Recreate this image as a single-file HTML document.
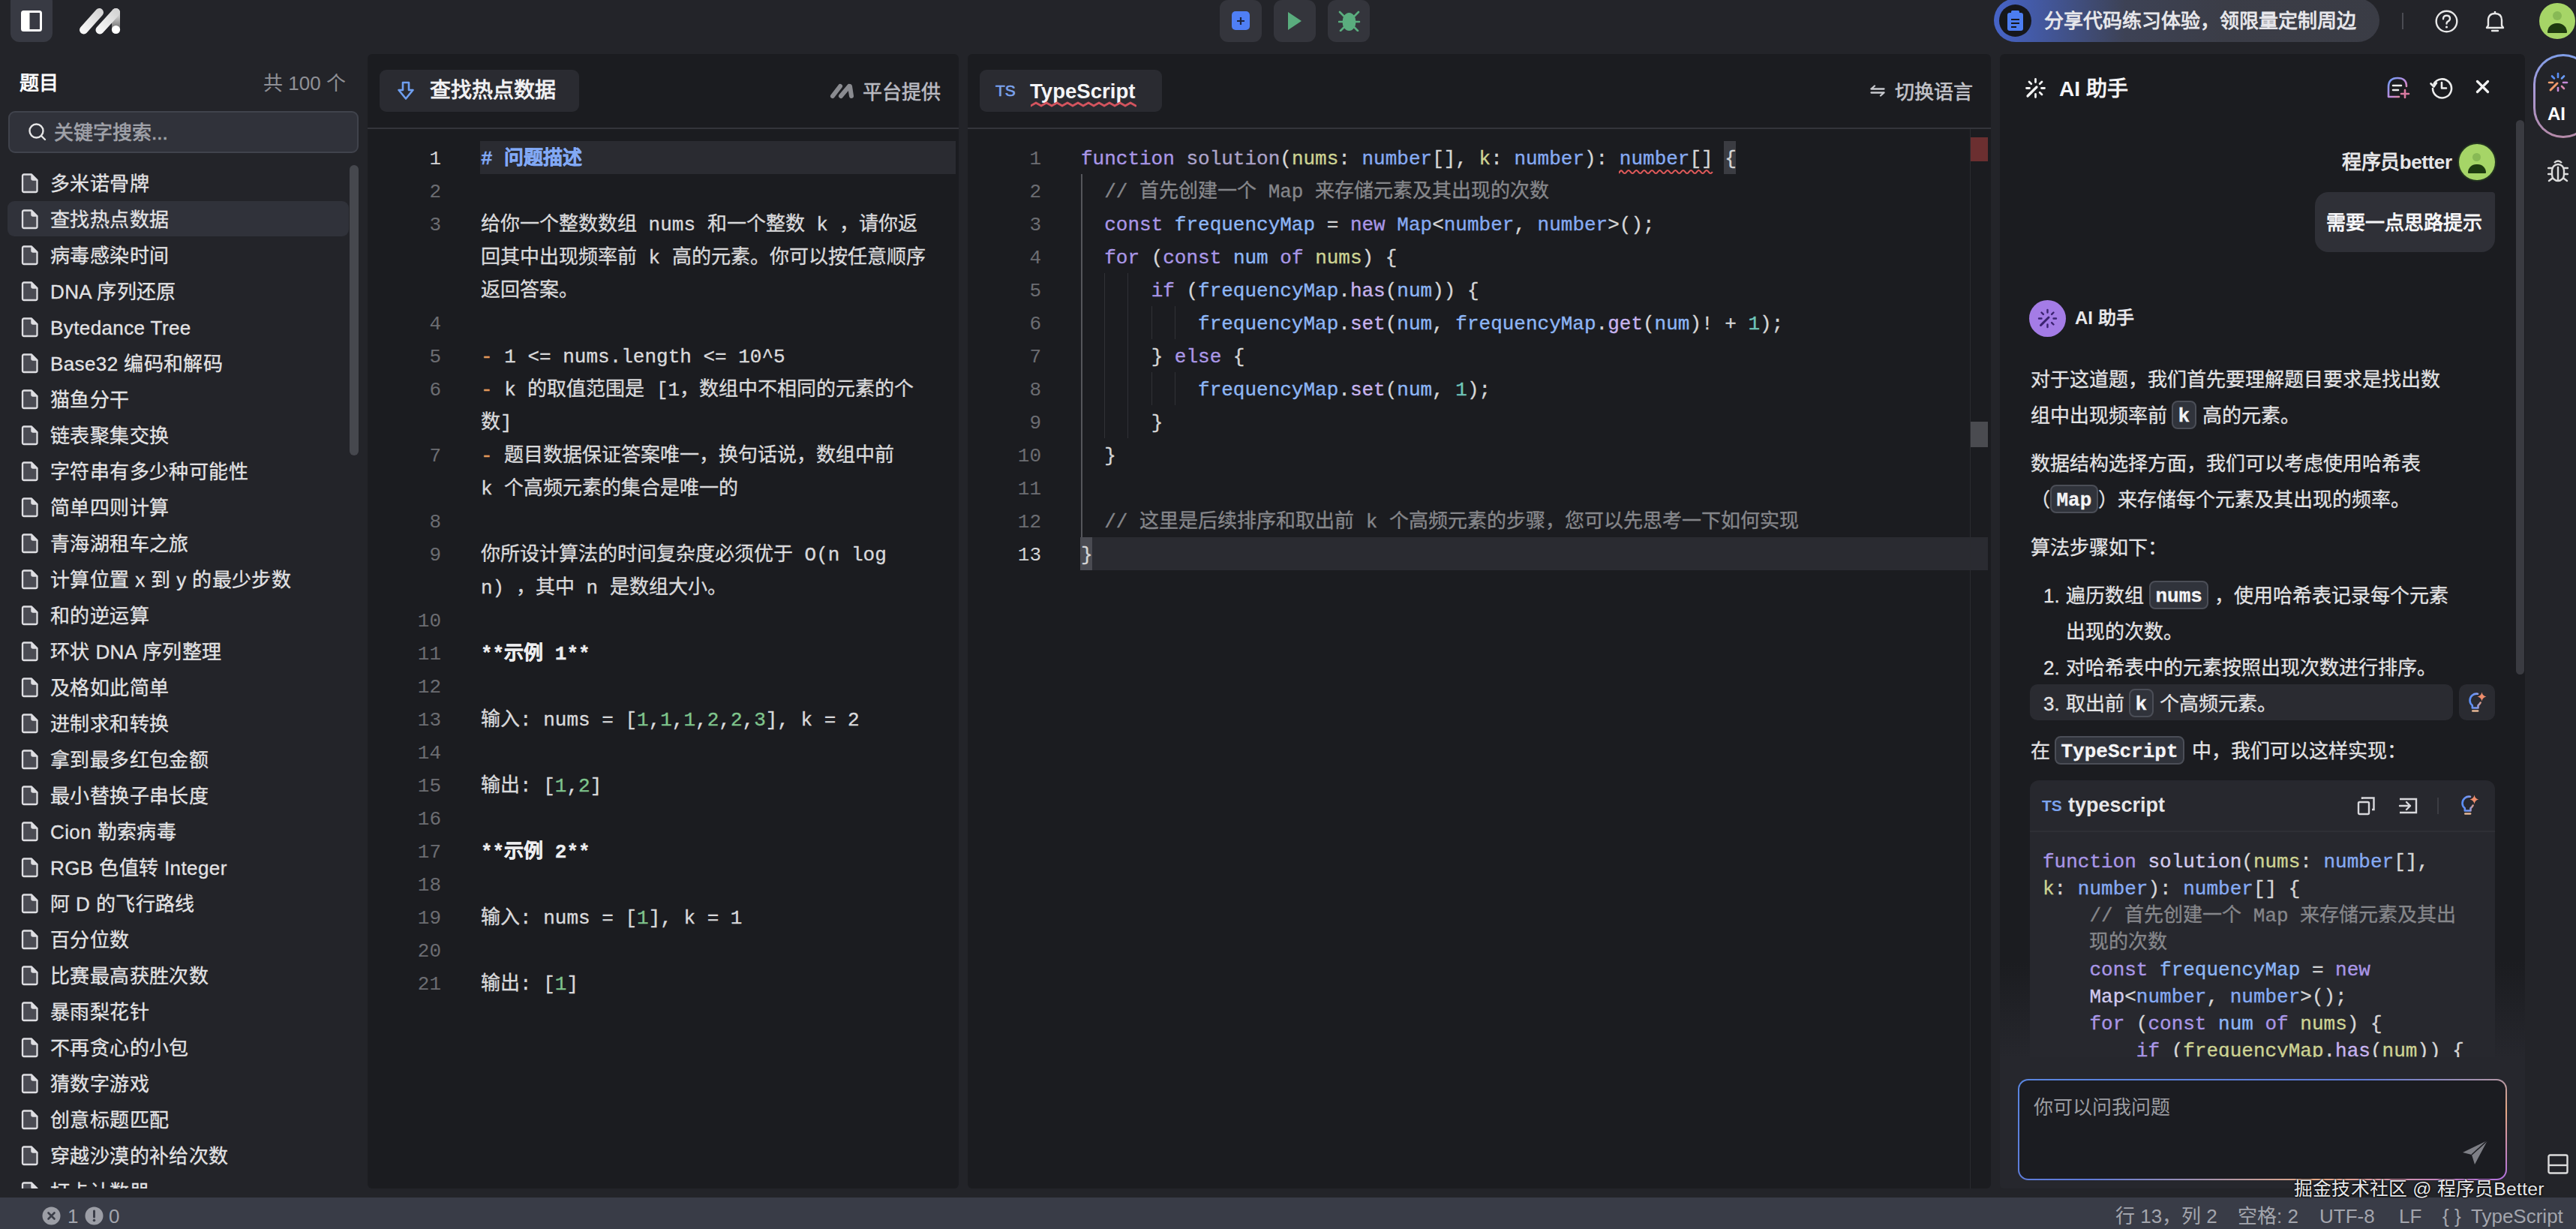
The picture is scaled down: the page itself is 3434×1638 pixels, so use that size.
<!DOCTYPE html><html lang="zh-CN"><head><meta charset="utf-8"><style>
*{margin:0;padding:0;box-sizing:border-box}
html,body{width:3434px;height:1638px;overflow:hidden;background:#232429;font-family:"Liberation Sans",sans-serif;color:#e4e4e6}
.abs{position:absolute}
.mono{font-family:"Liberation Mono",monospace}
.ln{position:absolute;margin-top:2px;-webkit-text-stroke:0.35px currentColor;white-space:pre;font-family:"Liberation Mono",monospace;font-size:26px;line-height:44px;height:44px}
.num{position:absolute;margin-top:2px;text-align:right;font-family:"Liberation Mono",monospace;font-size:26px;line-height:44px;height:44px;color:#6c6d72}
.kw{color:#a996e6}.fn{color:#aba3c8}.pa{color:#cdd393}.ty{color:#86aaf2}.va{color:#8db6f5}.pu{color:#d6d6d6}.cm{color:#85868a}.nu{color:#6fc4b9}.me{color:#c7b3ee}
.hd{color:#82a9f5;font-weight:bold}.or{color:#e0985a}.gn{color:#7fc48c}.bd{font-weight:bold;color:#ededef}.dsc{color:#d9d9db}.sq{text-decoration:underline wavy #d05555;text-decoration-thickness:2px;text-underline-offset:5px}
.fn2{color:#d2caee}.aip{position:absolute;white-space:pre;font-size:26px;line-height:48px;color:#e2e2e4;-webkit-text-stroke:0.3px currentColor}.chip{display:inline-block;vertical-align:middle;font-family:"Liberation Mono",monospace;font-weight:bold;color:#f4f4f6;background:#30333b;border:2px solid #4b4e57;border-radius:8px;padding:4px 6.5px 0;line-height:30px;height:38px;position:relative;top:-3px}
.li{position:absolute;left:0;width:490px;height:48px}
.li svg{position:absolute;left:28px;top:10px}
.li span{position:absolute;left:67px;top:1px;line-height:48px;font-size:26px;color:#e2e2e4;white-space:pre;letter-spacing:0.4px;-webkit-text-stroke:0.3px currentColor}
</style></head><body>
<div class="abs" style="left:14px;top:-10px;width:56px;height:66px;border-radius:12px;background:#383a43"></div>
<svg class="abs" style="left:28px;top:14px" width="28" height="28" viewBox="0 0 28 28">
<rect x="1.5" y="1.5" width="25" height="25" rx="2" fill="none" stroke="#fff" stroke-width="3"/>
<rect x="1.5" y="1.5" width="10" height="25" fill="#fff"/></svg>
<svg class="abs" style="left:104px;top:10px" width="60" height="40" viewBox="0 0 60 40">
<defs><linearGradient id="lg1" x1="0" y1="1" x2="1" y2="0"><stop offset="0" stop-color="#f6f6f6"/><stop offset="1" stop-color="#d6d6d6"/></linearGradient>
<linearGradient id="lg2" x1="0" y1="0" x2="0" y2="1"><stop offset="0" stop-color="#d8d8d8"/><stop offset="0.35" stop-color="#c8c8c8"/><stop offset="1" stop-color="#555"/></linearGradient></defs>
<rect x="45" y="1" width="11" height="32" rx="5.5" fill="url(#lg2)"/>
<line x1="7.5" y1="30" x2="28.5" y2="6.5" stroke="url(#lg1)" stroke-width="11" stroke-linecap="round"/>
<line x1="29" y1="30" x2="50.5" y2="6.5" stroke="url(#lg1)" stroke-width="11" stroke-linecap="round"/>
<circle cx="50.5" cy="29.5" r="5.6" fill="#fff"/></svg>
<div class="abs" style="left:1626px;top:0px;width:56px;height:56px;border-radius:11px;background:#34353c"></div>
<div class="abs" style="left:1698px;top:0px;width:56px;height:56px;border-radius:11px;background:#34353c"></div>
<div class="abs" style="left:1770px;top:0px;width:56px;height:56px;border-radius:11px;background:#34353c"></div>
<div class="abs" style="left:1642px;top:15px;width:24px;height:25px;border-radius:5px;background:#4f7ff5"></div>
<svg class="abs" style="left:1642px;top:15px" width="24" height="25" viewBox="0 0 24 25"><path d="M12 8v10M7 13h10" stroke="#1d2540" stroke-width="2.2"/></svg>
<svg class="abs" style="left:1716px;top:16px" width="20" height="24" viewBox="0 0 20 24"><path d="M1 0 L19 12 L1 24 Z" fill="#5aad7e"/></svg>
<svg class="abs" style="left:1784px;top:14px" width="30" height="28" viewBox="0 0 30 28">
<ellipse cx="14.5" cy="15" rx="9" ry="12" fill="#5aad7e"/>
<path d="M2 2 L8 8 M27 2 L21 8 M1 15 H6 M23 15 H28 M3 27 L8 22 M26 27 L21 22" stroke="#5aad7e" stroke-width="2.6" stroke-linecap="round"/></svg>
<div class="abs" style="left:2658px;top:-2px;width:514px;height:58px;border-radius:29px;background:linear-gradient(90deg,#4664c8 0%,#3d4255 34%,#3b3d47 60%,#3a3c45 100%)"></div>
<div class="abs" style="left:2665px;top:6px;width:43px;height:43px;border-radius:50%;background:#16171b"></div>
<svg class="abs" style="left:2675px;top:14px" width="23" height="28" viewBox="0 0 23 28"><rect x="1" y="3" width="21" height="24" rx="3" fill="#4c7df0"/><rect x="6" y="0" width="11" height="5" rx="1.5" fill="#4c7df0"/><path d="M6 12h11M6 17h11M6 22h7" stroke="#16171b" stroke-width="2.2"/></svg>
<div class="abs" style="left:2725px;top:8px;line-height:40px;font-size:26px;color:#e6e6ea;font-weight:bold;white-space:pre">分享代码练习体验，领限量定制周边</div>
<div class="abs" style="left:3202px;top:17px;width:2px;height:22px;background:#4a4b52"></div>
<svg class="abs" style="left:3246px;top:13px" width="31" height="31" viewBox="0 0 31 31"><circle cx="15.5" cy="15.5" r="13.8" fill="none" stroke="#e8e8e8" stroke-width="2.4"/><path d="M11 12.2 Q11 7.8 15.5 7.8 Q20 7.8 20 11.8 Q20 14.3 17.2 15.6 Q15.5 16.4 15.5 18.6" fill="none" stroke="#e8e8e8" stroke-width="2.4" stroke-linecap="round"/><circle cx="15.5" cy="23" r="1.6" fill="#e8e8e8"/></svg>
<svg class="abs" style="left:3311px;top:13px" width="30" height="32" viewBox="0 0 30 32"><path d="M4 24 L6 21 V14 Q6 5 15 5 Q24 5 24 14 V21 L26 24 Z" fill="none" stroke="#e8e8e8" stroke-width="2.4" stroke-linejoin="round"/><path d="M11 28 H19" stroke="#e8e8e8" stroke-width="2.4" stroke-linecap="round"/><path d="M15 2 V5" stroke="#e8e8e8" stroke-width="2.4"/></svg>
<div class="abs" style="left:3385px;top:4px;width:48px;height:48px;border-radius:50%;background:#a6d567;overflow:hidden"><div class="abs" style="left:18px;top:11px;width:12px;height:12px;border-radius:50%;background:#88b955"></div><div class="abs" style="left:11px;top:27px;width:26px;height:13px;border-radius:13px 13px 1px 1px;background:#1e3a10"></div></div>

<div class="abs" style="left:26px;top:92px;line-height:38px;font-size:26px;font-weight:bold;color:#fff">题目</div>
<div class="abs" style="left:351px;top:92px;line-height:38px;font-size:26px;color:#909197;white-space:pre">共 100 个</div>
<div class="abs" style="left:11px;top:148px;width:467px;height:56px;border-radius:9px;background:#30323a;border:2px solid #40434c"></div>
<svg class="abs" style="left:37px;top:163px" width="26" height="26" viewBox="0 0 26 26"><circle cx="11.5" cy="11.5" r="9" fill="none" stroke="#e6e6e6" stroke-width="2.4"/><path d="M18 18 L23 23" stroke="#e6e6e6" stroke-width="2.4" stroke-linecap="round"/></svg>
<div class="abs" style="left:72px;top:158px;line-height:38px;font-size:26px;color:#a0a2a9;white-space:pre;-webkit-text-stroke:0.7px currentColor">关键字搜索...</div>
<div class="abs" style="left:0;top:220px;width:490px;height:1364px;overflow:hidden">
<div class="abs" style="left:10px;top:48px;width:455px;height:47px;border-radius:9px;background:#30323a"></div>
<div class="li" style="top:0px"><svg width="24" height="28" viewBox="0 0 24 28"><path d="M4 2.5 H14 L21.5 10 V24 Q21.5 26 19.5 26 H4 Q2 26 2 24 V4.5 Q2 2.5 4 2.5 Z" fill="#4a4b53" stroke="#dedee2" stroke-width="2.3" stroke-linejoin="round"/><path d="M14 2.5 V8 Q14 10 16 10 H21.5 Z" fill="#dedee2" stroke="#dedee2" stroke-width="1.5" stroke-linejoin="round"/></svg><span>多米诺骨牌</span></div>
<div class="li" style="top:48px"><svg width="24" height="28" viewBox="0 0 24 28"><path d="M4 2.5 H14 L21.5 10 V24 Q21.5 26 19.5 26 H4 Q2 26 2 24 V4.5 Q2 2.5 4 2.5 Z" fill="#4a4b53" stroke="#dedee2" stroke-width="2.3" stroke-linejoin="round"/><path d="M14 2.5 V8 Q14 10 16 10 H21.5 Z" fill="#dedee2" stroke="#dedee2" stroke-width="1.5" stroke-linejoin="round"/></svg><span>查找热点数据</span></div>
<div class="li" style="top:96px"><svg width="24" height="28" viewBox="0 0 24 28"><path d="M4 2.5 H14 L21.5 10 V24 Q21.5 26 19.5 26 H4 Q2 26 2 24 V4.5 Q2 2.5 4 2.5 Z" fill="#4a4b53" stroke="#dedee2" stroke-width="2.3" stroke-linejoin="round"/><path d="M14 2.5 V8 Q14 10 16 10 H21.5 Z" fill="#dedee2" stroke="#dedee2" stroke-width="1.5" stroke-linejoin="round"/></svg><span>病毒感染时间</span></div>
<div class="li" style="top:144px"><svg width="24" height="28" viewBox="0 0 24 28"><path d="M4 2.5 H14 L21.5 10 V24 Q21.5 26 19.5 26 H4 Q2 26 2 24 V4.5 Q2 2.5 4 2.5 Z" fill="#4a4b53" stroke="#dedee2" stroke-width="2.3" stroke-linejoin="round"/><path d="M14 2.5 V8 Q14 10 16 10 H21.5 Z" fill="#dedee2" stroke="#dedee2" stroke-width="1.5" stroke-linejoin="round"/></svg><span>DNA 序列还原</span></div>
<div class="li" style="top:192px"><svg width="24" height="28" viewBox="0 0 24 28"><path d="M4 2.5 H14 L21.5 10 V24 Q21.5 26 19.5 26 H4 Q2 26 2 24 V4.5 Q2 2.5 4 2.5 Z" fill="#4a4b53" stroke="#dedee2" stroke-width="2.3" stroke-linejoin="round"/><path d="M14 2.5 V8 Q14 10 16 10 H21.5 Z" fill="#dedee2" stroke="#dedee2" stroke-width="1.5" stroke-linejoin="round"/></svg><span>Bytedance Tree</span></div>
<div class="li" style="top:240px"><svg width="24" height="28" viewBox="0 0 24 28"><path d="M4 2.5 H14 L21.5 10 V24 Q21.5 26 19.5 26 H4 Q2 26 2 24 V4.5 Q2 2.5 4 2.5 Z" fill="#4a4b53" stroke="#dedee2" stroke-width="2.3" stroke-linejoin="round"/><path d="M14 2.5 V8 Q14 10 16 10 H21.5 Z" fill="#dedee2" stroke="#dedee2" stroke-width="1.5" stroke-linejoin="round"/></svg><span>Base32 编码和解码</span></div>
<div class="li" style="top:288px"><svg width="24" height="28" viewBox="0 0 24 28"><path d="M4 2.5 H14 L21.5 10 V24 Q21.5 26 19.5 26 H4 Q2 26 2 24 V4.5 Q2 2.5 4 2.5 Z" fill="#4a4b53" stroke="#dedee2" stroke-width="2.3" stroke-linejoin="round"/><path d="M14 2.5 V8 Q14 10 16 10 H21.5 Z" fill="#dedee2" stroke="#dedee2" stroke-width="1.5" stroke-linejoin="round"/></svg><span>猫鱼分干</span></div>
<div class="li" style="top:336px"><svg width="24" height="28" viewBox="0 0 24 28"><path d="M4 2.5 H14 L21.5 10 V24 Q21.5 26 19.5 26 H4 Q2 26 2 24 V4.5 Q2 2.5 4 2.5 Z" fill="#4a4b53" stroke="#dedee2" stroke-width="2.3" stroke-linejoin="round"/><path d="M14 2.5 V8 Q14 10 16 10 H21.5 Z" fill="#dedee2" stroke="#dedee2" stroke-width="1.5" stroke-linejoin="round"/></svg><span>链表聚集交换</span></div>
<div class="li" style="top:384px"><svg width="24" height="28" viewBox="0 0 24 28"><path d="M4 2.5 H14 L21.5 10 V24 Q21.5 26 19.5 26 H4 Q2 26 2 24 V4.5 Q2 2.5 4 2.5 Z" fill="#4a4b53" stroke="#dedee2" stroke-width="2.3" stroke-linejoin="round"/><path d="M14 2.5 V8 Q14 10 16 10 H21.5 Z" fill="#dedee2" stroke="#dedee2" stroke-width="1.5" stroke-linejoin="round"/></svg><span>字符串有多少种可能性</span></div>
<div class="li" style="top:432px"><svg width="24" height="28" viewBox="0 0 24 28"><path d="M4 2.5 H14 L21.5 10 V24 Q21.5 26 19.5 26 H4 Q2 26 2 24 V4.5 Q2 2.5 4 2.5 Z" fill="#4a4b53" stroke="#dedee2" stroke-width="2.3" stroke-linejoin="round"/><path d="M14 2.5 V8 Q14 10 16 10 H21.5 Z" fill="#dedee2" stroke="#dedee2" stroke-width="1.5" stroke-linejoin="round"/></svg><span>简单四则计算</span></div>
<div class="li" style="top:480px"><svg width="24" height="28" viewBox="0 0 24 28"><path d="M4 2.5 H14 L21.5 10 V24 Q21.5 26 19.5 26 H4 Q2 26 2 24 V4.5 Q2 2.5 4 2.5 Z" fill="#4a4b53" stroke="#dedee2" stroke-width="2.3" stroke-linejoin="round"/><path d="M14 2.5 V8 Q14 10 16 10 H21.5 Z" fill="#dedee2" stroke="#dedee2" stroke-width="1.5" stroke-linejoin="round"/></svg><span>青海湖租车之旅</span></div>
<div class="li" style="top:528px"><svg width="24" height="28" viewBox="0 0 24 28"><path d="M4 2.5 H14 L21.5 10 V24 Q21.5 26 19.5 26 H4 Q2 26 2 24 V4.5 Q2 2.5 4 2.5 Z" fill="#4a4b53" stroke="#dedee2" stroke-width="2.3" stroke-linejoin="round"/><path d="M14 2.5 V8 Q14 10 16 10 H21.5 Z" fill="#dedee2" stroke="#dedee2" stroke-width="1.5" stroke-linejoin="round"/></svg><span>计算位置 x 到 y 的最少步数</span></div>
<div class="li" style="top:576px"><svg width="24" height="28" viewBox="0 0 24 28"><path d="M4 2.5 H14 L21.5 10 V24 Q21.5 26 19.5 26 H4 Q2 26 2 24 V4.5 Q2 2.5 4 2.5 Z" fill="#4a4b53" stroke="#dedee2" stroke-width="2.3" stroke-linejoin="round"/><path d="M14 2.5 V8 Q14 10 16 10 H21.5 Z" fill="#dedee2" stroke="#dedee2" stroke-width="1.5" stroke-linejoin="round"/></svg><span>和的逆运算</span></div>
<div class="li" style="top:624px"><svg width="24" height="28" viewBox="0 0 24 28"><path d="M4 2.5 H14 L21.5 10 V24 Q21.5 26 19.5 26 H4 Q2 26 2 24 V4.5 Q2 2.5 4 2.5 Z" fill="#4a4b53" stroke="#dedee2" stroke-width="2.3" stroke-linejoin="round"/><path d="M14 2.5 V8 Q14 10 16 10 H21.5 Z" fill="#dedee2" stroke="#dedee2" stroke-width="1.5" stroke-linejoin="round"/></svg><span>环状 DNA 序列整理</span></div>
<div class="li" style="top:672px"><svg width="24" height="28" viewBox="0 0 24 28"><path d="M4 2.5 H14 L21.5 10 V24 Q21.5 26 19.5 26 H4 Q2 26 2 24 V4.5 Q2 2.5 4 2.5 Z" fill="#4a4b53" stroke="#dedee2" stroke-width="2.3" stroke-linejoin="round"/><path d="M14 2.5 V8 Q14 10 16 10 H21.5 Z" fill="#dedee2" stroke="#dedee2" stroke-width="1.5" stroke-linejoin="round"/></svg><span>及格如此简单</span></div>
<div class="li" style="top:720px"><svg width="24" height="28" viewBox="0 0 24 28"><path d="M4 2.5 H14 L21.5 10 V24 Q21.5 26 19.5 26 H4 Q2 26 2 24 V4.5 Q2 2.5 4 2.5 Z" fill="#4a4b53" stroke="#dedee2" stroke-width="2.3" stroke-linejoin="round"/><path d="M14 2.5 V8 Q14 10 16 10 H21.5 Z" fill="#dedee2" stroke="#dedee2" stroke-width="1.5" stroke-linejoin="round"/></svg><span>进制求和转换</span></div>
<div class="li" style="top:768px"><svg width="24" height="28" viewBox="0 0 24 28"><path d="M4 2.5 H14 L21.5 10 V24 Q21.5 26 19.5 26 H4 Q2 26 2 24 V4.5 Q2 2.5 4 2.5 Z" fill="#4a4b53" stroke="#dedee2" stroke-width="2.3" stroke-linejoin="round"/><path d="M14 2.5 V8 Q14 10 16 10 H21.5 Z" fill="#dedee2" stroke="#dedee2" stroke-width="1.5" stroke-linejoin="round"/></svg><span>拿到最多红包金额</span></div>
<div class="li" style="top:816px"><svg width="24" height="28" viewBox="0 0 24 28"><path d="M4 2.5 H14 L21.5 10 V24 Q21.5 26 19.5 26 H4 Q2 26 2 24 V4.5 Q2 2.5 4 2.5 Z" fill="#4a4b53" stroke="#dedee2" stroke-width="2.3" stroke-linejoin="round"/><path d="M14 2.5 V8 Q14 10 16 10 H21.5 Z" fill="#dedee2" stroke="#dedee2" stroke-width="1.5" stroke-linejoin="round"/></svg><span>最小替换子串长度</span></div>
<div class="li" style="top:864px"><svg width="24" height="28" viewBox="0 0 24 28"><path d="M4 2.5 H14 L21.5 10 V24 Q21.5 26 19.5 26 H4 Q2 26 2 24 V4.5 Q2 2.5 4 2.5 Z" fill="#4a4b53" stroke="#dedee2" stroke-width="2.3" stroke-linejoin="round"/><path d="M14 2.5 V8 Q14 10 16 10 H21.5 Z" fill="#dedee2" stroke="#dedee2" stroke-width="1.5" stroke-linejoin="round"/></svg><span>Cion 勒索病毒</span></div>
<div class="li" style="top:912px"><svg width="24" height="28" viewBox="0 0 24 28"><path d="M4 2.5 H14 L21.5 10 V24 Q21.5 26 19.5 26 H4 Q2 26 2 24 V4.5 Q2 2.5 4 2.5 Z" fill="#4a4b53" stroke="#dedee2" stroke-width="2.3" stroke-linejoin="round"/><path d="M14 2.5 V8 Q14 10 16 10 H21.5 Z" fill="#dedee2" stroke="#dedee2" stroke-width="1.5" stroke-linejoin="round"/></svg><span>RGB 色值转 Integer</span></div>
<div class="li" style="top:960px"><svg width="24" height="28" viewBox="0 0 24 28"><path d="M4 2.5 H14 L21.5 10 V24 Q21.5 26 19.5 26 H4 Q2 26 2 24 V4.5 Q2 2.5 4 2.5 Z" fill="#4a4b53" stroke="#dedee2" stroke-width="2.3" stroke-linejoin="round"/><path d="M14 2.5 V8 Q14 10 16 10 H21.5 Z" fill="#dedee2" stroke="#dedee2" stroke-width="1.5" stroke-linejoin="round"/></svg><span>阿 D 的飞行路线</span></div>
<div class="li" style="top:1008px"><svg width="24" height="28" viewBox="0 0 24 28"><path d="M4 2.5 H14 L21.5 10 V24 Q21.5 26 19.5 26 H4 Q2 26 2 24 V4.5 Q2 2.5 4 2.5 Z" fill="#4a4b53" stroke="#dedee2" stroke-width="2.3" stroke-linejoin="round"/><path d="M14 2.5 V8 Q14 10 16 10 H21.5 Z" fill="#dedee2" stroke="#dedee2" stroke-width="1.5" stroke-linejoin="round"/></svg><span>百分位数</span></div>
<div class="li" style="top:1056px"><svg width="24" height="28" viewBox="0 0 24 28"><path d="M4 2.5 H14 L21.5 10 V24 Q21.5 26 19.5 26 H4 Q2 26 2 24 V4.5 Q2 2.5 4 2.5 Z" fill="#4a4b53" stroke="#dedee2" stroke-width="2.3" stroke-linejoin="round"/><path d="M14 2.5 V8 Q14 10 16 10 H21.5 Z" fill="#dedee2" stroke="#dedee2" stroke-width="1.5" stroke-linejoin="round"/></svg><span>比赛最高获胜次数</span></div>
<div class="li" style="top:1104px"><svg width="24" height="28" viewBox="0 0 24 28"><path d="M4 2.5 H14 L21.5 10 V24 Q21.5 26 19.5 26 H4 Q2 26 2 24 V4.5 Q2 2.5 4 2.5 Z" fill="#4a4b53" stroke="#dedee2" stroke-width="2.3" stroke-linejoin="round"/><path d="M14 2.5 V8 Q14 10 16 10 H21.5 Z" fill="#dedee2" stroke="#dedee2" stroke-width="1.5" stroke-linejoin="round"/></svg><span>暴雨梨花针</span></div>
<div class="li" style="top:1152px"><svg width="24" height="28" viewBox="0 0 24 28"><path d="M4 2.5 H14 L21.5 10 V24 Q21.5 26 19.5 26 H4 Q2 26 2 24 V4.5 Q2 2.5 4 2.5 Z" fill="#4a4b53" stroke="#dedee2" stroke-width="2.3" stroke-linejoin="round"/><path d="M14 2.5 V8 Q14 10 16 10 H21.5 Z" fill="#dedee2" stroke="#dedee2" stroke-width="1.5" stroke-linejoin="round"/></svg><span>不再贪心的小包</span></div>
<div class="li" style="top:1200px"><svg width="24" height="28" viewBox="0 0 24 28"><path d="M4 2.5 H14 L21.5 10 V24 Q21.5 26 19.5 26 H4 Q2 26 2 24 V4.5 Q2 2.5 4 2.5 Z" fill="#4a4b53" stroke="#dedee2" stroke-width="2.3" stroke-linejoin="round"/><path d="M14 2.5 V8 Q14 10 16 10 H21.5 Z" fill="#dedee2" stroke="#dedee2" stroke-width="1.5" stroke-linejoin="round"/></svg><span>猜数字游戏</span></div>
<div class="li" style="top:1248px"><svg width="24" height="28" viewBox="0 0 24 28"><path d="M4 2.5 H14 L21.5 10 V24 Q21.5 26 19.5 26 H4 Q2 26 2 24 V4.5 Q2 2.5 4 2.5 Z" fill="#4a4b53" stroke="#dedee2" stroke-width="2.3" stroke-linejoin="round"/><path d="M14 2.5 V8 Q14 10 16 10 H21.5 Z" fill="#dedee2" stroke="#dedee2" stroke-width="1.5" stroke-linejoin="round"/></svg><span>创意标题匹配</span></div>
<div class="li" style="top:1296px"><svg width="24" height="28" viewBox="0 0 24 28"><path d="M4 2.5 H14 L21.5 10 V24 Q21.5 26 19.5 26 H4 Q2 26 2 24 V4.5 Q2 2.5 4 2.5 Z" fill="#4a4b53" stroke="#dedee2" stroke-width="2.3" stroke-linejoin="round"/><path d="M14 2.5 V8 Q14 10 16 10 H21.5 Z" fill="#dedee2" stroke="#dedee2" stroke-width="1.5" stroke-linejoin="round"/></svg><span>穿越沙漠的补给次数</span></div>
<div class="li" style="top:1344px"><svg width="24" height="28" viewBox="0 0 24 28"><path d="M4 2.5 H14 L21.5 10 V24 Q21.5 26 19.5 26 H4 Q2 26 2 24 V4.5 Q2 2.5 4 2.5 Z" fill="#4a4b53" stroke="#dedee2" stroke-width="2.3" stroke-linejoin="round"/><path d="M14 2.5 V8 Q14 10 16 10 H21.5 Z" fill="#dedee2" stroke="#dedee2" stroke-width="1.5" stroke-linejoin="round"/></svg><span>打卡计数器</span></div>
</div>
<div class="abs" style="left:466px;top:220px;width:12px;height:387px;border-radius:6px;background:#46484e"></div>
<div class="abs" style="left:490px;top:72px;width:788px;height:1512px;border-radius:6px;background:#1b1c20;overflow:hidden">
<div class="abs" style="left:0;top:98px;width:788px;height:2px;background:#34353b"></div>
</div>
<div class="abs" style="left:1290px;top:72px;width:1364px;height:1512px;border-radius:6px;background:#1b1c20;overflow:hidden">
<div class="abs" style="left:0;top:98px;width:1364px;height:2px;background:#34353b"></div>
</div>
<div class="abs" style="left:2666px;top:72px;width:700px;height:1512px;border-radius:6px;background:linear-gradient(180deg,#1b1c20 0px,#1b1c20 1210px,#26272d 1337px,#26272d 1512px);overflow:hidden"></div>
<div class="abs" style="left:506px;top:93px;width:266px;height:56px;border-radius:9px;background:#2a2b31"></div>
<svg class="abs" style="left:529px;top:108px" width="24" height="26" viewBox="0 0 24 26"><path d="M8 2 H16 V12 H21.5 L12 23.5 L2.5 12 H8 Z" fill="none" stroke="#6f9ff0" stroke-width="2.6" stroke-linejoin="round"/></svg>
<div class="abs" style="left:573px;top:100px;line-height:42px;font-size:28px;font-weight:bold;color:#f0f0f2;white-space:pre">查找热点数据</div>
<svg class="abs" style="left:1106px;top:110px" width="34" height="22" viewBox="0 0 34 22"><line x1="4" y1="18" x2="14" y2="5" stroke="#8a8b90" stroke-width="6" stroke-linecap="round"/><line x1="15" y1="18" x2="26" y2="5" stroke="#8a8b90" stroke-width="6" stroke-linecap="round"/><line x1="27" y1="5" x2="29" y2="18" stroke="#8a8b90" stroke-width="6" stroke-linecap="round"/></svg>
<div class="abs" style="left:1150px;top:102px;line-height:42px;font-size:26px;color:#babbc2;-webkit-text-stroke:0.6px currentColor;white-space:pre">平台提供</div>
<div class="abs" style="left:640px;top:188px;width:634px;height:44px;background:#2a2b31"></div>
<div class="num" style="left:520px;width:68px;top:188px;color:#d4d4d6">1</div>
<div class="ln dsc" style="left:641px;top:188px"><span class="hd"># </span><span class="hd">问题描述</span></div>
<div class="num" style="left:520px;width:68px;top:232px;color:#6c6d72">2</div>
<div class="num" style="left:520px;width:68px;top:276px;color:#6c6d72">3</div>
<div class="ln dsc" style="left:641px;top:276px">给你一个整数数组 nums 和一个整数 k ，请你返</div>
<div class="ln dsc" style="left:641px;top:320px">回其中出现频率前 k 高的元素。你可以按任意顺序</div>
<div class="ln dsc" style="left:641px;top:364px">返回答案。</div>
<div class="num" style="left:520px;width:68px;top:408px;color:#6c6d72">4</div>
<div class="num" style="left:520px;width:68px;top:452px;color:#6c6d72">5</div>
<div class="ln dsc" style="left:641px;top:452px"><span class="or">-</span> 1 &lt;= nums.length &lt;= 10^5</div>
<div class="num" style="left:520px;width:68px;top:496px;color:#6c6d72">6</div>
<div class="ln dsc" style="left:641px;top:496px"><span class="or">-</span> k 的取值范围是 [1，数组中不相同的元素的个</div>
<div class="ln dsc" style="left:641px;top:540px">数]</div>
<div class="num" style="left:520px;width:68px;top:584px;color:#6c6d72">7</div>
<div class="ln dsc" style="left:641px;top:584px"><span class="or">-</span> 题目数据保证答案唯一，换句话说，数组中前</div>
<div class="ln dsc" style="left:641px;top:628px">k 个高频元素的集合是唯一的</div>
<div class="num" style="left:520px;width:68px;top:672px;color:#6c6d72">8</div>
<div class="num" style="left:520px;width:68px;top:716px;color:#6c6d72">9</div>
<div class="ln dsc" style="left:641px;top:716px">你所设计算法的时间复杂度必须优于 O(n log</div>
<div class="ln dsc" style="left:641px;top:760px">n) ，其中 n 是数组大小。</div>
<div class="num" style="left:520px;width:68px;top:804px;color:#6c6d72">10</div>
<div class="num" style="left:520px;width:68px;top:848px;color:#6c6d72">11</div>
<div class="ln dsc" style="left:641px;top:848px"><span class="bd">**示例 1**</span></div>
<div class="num" style="left:520px;width:68px;top:892px;color:#6c6d72">12</div>
<div class="num" style="left:520px;width:68px;top:936px;color:#6c6d72">13</div>
<div class="ln dsc" style="left:641px;top:936px">输入: nums = [<span class="gn">1</span>,<span class="gn">1</span>,<span class="gn">1</span>,<span class="gn">2</span>,<span class="gn">2</span>,<span class="gn">3</span>], k = 2</div>
<div class="num" style="left:520px;width:68px;top:980px;color:#6c6d72">14</div>
<div class="num" style="left:520px;width:68px;top:1024px;color:#6c6d72">15</div>
<div class="ln dsc" style="left:641px;top:1024px">输出: [<span class="gn">1</span>,<span class="gn">2</span>]</div>
<div class="num" style="left:520px;width:68px;top:1068px;color:#6c6d72">16</div>
<div class="num" style="left:520px;width:68px;top:1112px;color:#6c6d72">17</div>
<div class="ln dsc" style="left:641px;top:1112px"><span class="bd">**示例 2**</span></div>
<div class="num" style="left:520px;width:68px;top:1156px;color:#6c6d72">18</div>
<div class="num" style="left:520px;width:68px;top:1200px;color:#6c6d72">19</div>
<div class="ln dsc" style="left:641px;top:1200px">输入: nums = [<span class="gn">1</span>], k = 1</div>
<div class="num" style="left:520px;width:68px;top:1244px;color:#6c6d72">20</div>
<div class="num" style="left:520px;width:68px;top:1288px;color:#6c6d72">21</div>
<div class="ln dsc" style="left:641px;top:1288px">输出: [<span class="gn">1</span>]</div>
<div class="abs" style="left:1306px;top:93px;width:243px;height:56px;border-radius:9px;background:#2a2b31"></div>
<div class="abs" style="left:1327px;top:106px;line-height:30px;font-size:21px;color:#7ba3ee;-webkit-text-stroke:0.6px #7ba3ee;white-space:pre">TS</div>
<div class="abs" style="left:1373px;top:101px;line-height:42px;font-size:27.6px;font-weight:bold;color:#f4f4f6;white-space:pre">TypeScript</div>
<svg class="abs" style="left:1374px;top:133px" width="141" height="12" viewBox="0 0 141 12"><path d="M0 8 L7 4 L14 8 L21 4 L28 8 L35 4 L42 8 L49 4 L56 8 L63 4 L70 8 L77 4 L84 8 L91 4 L98 8 L105 4 L112 8 L119 4 L126 8 L133 4 L140 8" fill="none" stroke="#d2545e" stroke-width="2.8" stroke-linejoin="round" stroke-linecap="round"/></svg>
<svg class="abs" style="left:2493px;top:113px" width="20" height="16" viewBox="0 0 20 16"><path d="M1.5 5.5 H18.5 M1.5 5.5 L6 1.5 M18.5 10.5 H1.5 M18.5 10.5 L14 14.5" fill="none" stroke="#c8c9ce" stroke-width="2.3" stroke-linecap="round" stroke-linejoin="round"/></svg>
<div class="abs" style="left:2526px;top:102px;line-height:42px;font-size:26px;color:#c2c3c9;-webkit-text-stroke:0.6px currentColor;white-space:pre">切换语言</div>
<div class="abs" style="left:1440px;top:716px;width:1210px;height:44px;background:#2a2b31"></div>
<div class="abs" style="left:2298px;top:188px;width:16px;height:44px;background:#3b3c42"></div>
<div class="abs" style="left:1440px;top:716px;width:16px;height:44px;background:#4a4b52"></div>
<div class="abs" style="left:1441px;top:232px;width:2px;height:484px;background:#55565b"></div>
<div class="abs" style="left:1472px;top:364px;width:1px;height:220px;background:#303136"></div>
<div class="abs" style="left:1503px;top:364px;width:1px;height:220px;background:#303136"></div>
<div class="abs" style="left:1535px;top:408px;width:1px;height:44px;background:#303136"></div>
<div class="abs" style="left:1535px;top:496px;width:1px;height:44px;background:#303136"></div>
<div class="abs" style="left:1566px;top:408px;width:1px;height:44px;background:#303136"></div>
<div class="abs" style="left:1566px;top:496px;width:1px;height:44px;background:#303136"></div>
<div class="num" style="left:1320px;width:68px;top:188px;color:#6c6d72">1</div>
<div class="ln" style="left:1441px;top:188px"><span class="kw">function</span> <span class="fn">solution</span><span class="pu">(</span><span class="pa">nums</span><span class="pu">: </span><span class="ty">number</span><span class="pu">[], </span><span class="pa">k</span><span class="pu">: </span><span class="ty">number</span><span class="pu">): </span><span class="ty">number</span><span class="pu">[] </span><span class="pu br">{</span></div>
<div class="num" style="left:1320px;width:68px;top:232px;color:#6c6d72">2</div>
<div class="ln" style="left:1441px;top:232px">  <span class="cm">// 首先创建一个 Map 来存储元素及其出现的次数</span></div>
<div class="num" style="left:1320px;width:68px;top:276px;color:#6c6d72">3</div>
<div class="ln" style="left:1441px;top:276px">  <span class="kw">const</span> <span class="va">frequencyMap</span><span class="pu"> = </span><span class="kw">new</span> <span class="ty">Map</span><span class="pu">&lt;</span><span class="ty">number</span><span class="pu">, </span><span class="ty">number</span><span class="pu">&gt;();</span></div>
<div class="num" style="left:1320px;width:68px;top:320px;color:#6c6d72">4</div>
<div class="ln" style="left:1441px;top:320px">  <span class="kw">for</span><span class="pu"> (</span><span class="kw">const</span> <span class="va">num</span> <span class="kw">of</span> <span class="pa">nums</span><span class="pu">) {</span></div>
<div class="num" style="left:1320px;width:68px;top:364px;color:#6c6d72">5</div>
<div class="ln" style="left:1441px;top:364px">      <span class="kw">if</span><span class="pu"> (</span><span class="va">frequencyMap</span><span class="pu">.</span><span class="me">has</span><span class="pu">(</span><span class="va">num</span><span class="pu">)) {</span></div>
<div class="num" style="left:1320px;width:68px;top:408px;color:#6c6d72">6</div>
<div class="ln" style="left:1441px;top:408px">          <span class="va">frequencyMap</span><span class="pu">.</span><span class="me">set</span><span class="pu">(</span><span class="va">num</span><span class="pu">, </span><span class="va">frequencyMap</span><span class="pu">.</span><span class="me">get</span><span class="pu">(</span><span class="va">num</span><span class="pu">)! + </span><span class="nu">1</span><span class="pu">);</span></div>
<div class="num" style="left:1320px;width:68px;top:452px;color:#6c6d72">7</div>
<div class="ln" style="left:1441px;top:452px">      <span class="pu">} </span><span class="kw">else</span><span class="pu"> {</span></div>
<div class="num" style="left:1320px;width:68px;top:496px;color:#6c6d72">8</div>
<div class="ln" style="left:1441px;top:496px">          <span class="va">frequencyMap</span><span class="pu">.</span><span class="me">set</span><span class="pu">(</span><span class="va">num</span><span class="pu">, </span><span class="nu">1</span><span class="pu">);</span></div>
<div class="num" style="left:1320px;width:68px;top:540px;color:#6c6d72">9</div>
<div class="ln" style="left:1441px;top:540px">      <span class="pu">}</span></div>
<div class="num" style="left:1320px;width:68px;top:584px;color:#6c6d72">10</div>
<div class="ln" style="left:1441px;top:584px">  <span class="pu">}</span></div>
<div class="num" style="left:1320px;width:68px;top:628px;color:#6c6d72">11</div>
<div class="num" style="left:1320px;width:68px;top:672px;color:#6c6d72">12</div>
<div class="ln" style="left:1441px;top:672px">  <span class="cm">// 这里是后续排序和取出前 k 个高频元素的步骤，您可以先思考一下如何实现</span></div>
<div class="num" style="left:1320px;width:68px;top:716px;color:#d4d4d6">13</div>
<div class="ln" style="left:1441px;top:716px"><span class="pu br2">}</span></div>
<svg class="abs" style="left:2158px;top:224px" width="126" height="10" viewBox="0 0 126 10"><path d="M0 7 Q2.6 1 5.2 5 Q7.8 9 10.4 5 Q13.0 1 15.6 5 Q18.2 9 20.8 5 Q23.4 1 26.0 5 Q28.6 9 31.2 5 Q33.8 1 36.4 5 Q39.0 9 41.6 5 Q44.2 1 46.8 5 Q49.4 9 52.0 5 Q54.6 1 57.2 5 Q59.8 9 62.4 5 Q65.0 1 67.6 5 Q70.2 9 72.8 5 Q75.4 1 78.0 5 Q80.6 9 83.2 5 Q85.8 1 88.4 5 Q91.0 9 93.6 5 Q96.2 1 98.8 5 Q101.4 9 104.0 5 Q106.6 1 109.2 5 Q111.8 9 114.4 5 Q117.0 1 119.6 5 Q122.2 9 124.8 5" fill="none" stroke="#e05a5a" stroke-width="2.2"/></svg>
<div class="abs" style="left:2626px;top:172px;width:1px;height:1412px;background:#2a2b30"></div>
<div class="abs" style="left:2627px;top:183px;width:23px;height:32px;background:#6b2f30"></div>
<div class="abs" style="left:2627px;top:562px;width:23px;height:34px;background:#4a4b50"></div>
<svg class="abs" style="left:2699px;top:103px" width="29" height="29" viewBox="0 0 29 29"><g stroke="#f2f2f2" stroke-width="2.8" stroke-linecap="round"><path d="M14.5 2.5v4M14.5 22.5v4M2.5 14.5h4M22.5 14.5h4M6 6l2.8 2.8M20.2 20.2L23 23M23 6l-2.8 2.8M8.8 20.2L6 23"/></g><path d="M4 25 L16 13" stroke="#f2f2f2" stroke-width="3.2" stroke-linecap="round"/></svg>
<div class="abs" style="left:2745px;top:98px;line-height:42px;font-size:28px;font-weight:bold;color:#f4f4f6;white-space:pre">AI 助手</div>
<svg class="abs" style="left:3181px;top:101px" width="32" height="32" viewBox="0 0 32 32"><defs><linearGradient id="gnc" x1="0" y1="0" x2="1" y2="1"><stop offset="0" stop-color="#6a9cf7"/><stop offset="0.6" stop-color="#c78ad8"/><stop offset="1" stop-color="#f08a6a"/></linearGradient></defs><path d="M27 14 Q27 3 15 3 Q3 3 3 15 V28 H17" fill="none" stroke="url(#gnc)" stroke-width="2.6" stroke-linecap="round" stroke-linejoin="round"/><path d="M9 13h11M9 19h7" stroke="#ececec" stroke-width="2.6" stroke-linecap="round"/><path d="M25 19v10M20 24h10" stroke="#d97aa0" stroke-width="2.6" stroke-linecap="round"/></svg>
<svg class="abs" style="left:3238px;top:101px" width="33" height="32" viewBox="0 0 33 32"><path d="M6.5 11 A12.5 12.5 0 1 1 5 17" fill="none" stroke="#ececec" stroke-width="2.6" stroke-linecap="round"/><path d="M2.5 10.5 L6.5 14.5 L10 9.5" fill="none" stroke="#ececec" stroke-width="2.6" stroke-linecap="round" stroke-linejoin="round"/><path d="M17 9v7.5h6" fill="none" stroke="#ececec" stroke-width="2.6" stroke-linecap="round" stroke-linejoin="round"/></svg>
<svg class="abs" style="left:3300px;top:106px" width="19" height="19" viewBox="0 0 19 19"><path d="M2.5 2.5 L16.5 16.5 M16.5 2.5 L2.5 16.5" stroke="#f2f2f2" stroke-width="3.2" stroke-linecap="round"/></svg>
<div class="abs" style="left:3122px;top:196px;line-height:40px;font-size:26px;font-weight:bold;color:#e6e6e8;white-space:pre;letter-spacing:-0.4px">程序员better</div>
<div class="abs" style="left:3278px;top:192px;width:48px;height:48px;border-radius:50%;background:#a6d567;overflow:hidden;box-shadow:0 0 0 2px #233320"><div class="abs" style="left:18px;top:12px;width:11px;height:11px;border-radius:50%;background:#88b955"></div><div class="abs" style="left:12px;top:27px;width:24px;height:12px;border-radius:12px 12px 1px 1px;background:#1e3a10"></div></div>
<div class="abs" style="left:3086px;top:256px;width:240px;height:80px;border-radius:18px 4px 18px 18px;background:#2f3037"></div>
<div class="abs" style="left:3101px;top:277px;line-height:40px;font-size:26px;font-weight:bold;color:#f6f6f8;white-space:pre">需要一点思路提示</div>
<div class="abs" style="left:2705px;top:400px;width:49px;height:49px;border-radius:50%;background:#a47ce6"></div>
<svg class="abs" style="left:2714px;top:409px" width="31" height="31" viewBox="0 0 31 31"><g stroke="#3b2370" stroke-width="2.4" stroke-linecap="round"><path d="M15.5 4v3.5M15.5 23.5v3.5M4 15.5h3.5M23.5 15.5h3.5M7.5 7.5l2.4 2.4M21.1 21.1l2.4 2.4M23.5 7.5l-2.4 2.4M9.9 21.1l-2.4 2.4"/></g><path d="M6.5 24.5 L17 14" stroke="#3b2370" stroke-width="3" stroke-linecap="round"/></svg>
<div class="abs" style="left:2766px;top:405px;line-height:38px;font-size:24px;font-weight:bold;color:#e8e8ea;white-space:pre">AI 助手</div>
<div class="abs aip" style="left:2707px;top:482px;">对于这道题，我们首先要理解题目要求是找出数</div>
<div class="abs aip" style="left:2707px;top:530px;">组中出现频率前<span class="chip" style="margin-left:6px;margin-right:8px">k</span>高的元素。</div>
<div class="abs aip" style="left:2707px;top:594px;">数据结构选择方面，我们可以考虑使用哈希表</div>
<div class="abs aip" style="left:2707px;top:642px;">（<span class="chip" style="margin-left:0px;margin-right:0px">Map</span>）来存储每个元素及其出现的频率。</div>
<div class="abs aip" style="left:2707px;top:706px;">算法步骤如下：</div>
<div class="abs aip" style="left:2724px;top:770px;">1. </div>
<div class="abs aip" style="left:2754px;top:770px;">遍历数组<span class="chip" style="margin-left:7px;margin-right:8px">nums</span>，使用哈希表记录每个元素</div>
<div class="abs aip" style="left:2754px;top:818px;">出现的次数。</div>
<div class="abs aip" style="left:2724px;top:866px;">2. </div>
<div class="abs aip" style="left:2754px;top:866px;">对哈希表中的元素按照出现次数进行排序。</div>
<div class="abs" style="left:2706px;top:912px;width:564px;height:48px;border-radius:10px;background:#2a2b31"></div>
<div class="abs" style="left:3278px;top:912px;width:48px;height:48px;border-radius:10px;background:#2a2b31"></div>
<div class="abs aip" style="left:2724px;top:914px;">3. </div>
<div class="abs aip" style="left:2754px;top:914px;">取出前<span class="chip" style="margin-left:6px;margin-right:8px">k</span>个高频元素。</div>
<div class="abs aip" style="left:2707px;top:977px;">在<span class="chip" style="margin-left:6px;margin-right:10px">TypeScript</span>中，我们可以这样实现：</div>
<svg class="abs" style="left:3288px;top:921px" width="28" height="30" viewBox="0 0 28 30"><defs><linearGradient id="gb3288" x1="0" y1="0" x2="1" y2="0"><stop offset="0" stop-color="#5a8ef5"/><stop offset="0.7" stop-color="#7f9af0"/><stop offset="1" stop-color="#d99a8a"/></linearGradient></defs><path d="M15 3.8 A8.8 8.8 0 0 0 4.5 12.5 Q4.5 16.5 7.8 19.2 V22.5 H15.5 V19.2 Q17.5 17.6 18.6 15.5" fill="none" stroke="url(#gb3288)" stroke-width="2.6" stroke-linecap="round" stroke-linejoin="round"/><path d="M8.3 26.5h6.8" stroke="#e6b896" stroke-width="2.6" stroke-linecap="round"/><path d="M20.5 1.5 Q21.4 6.6 26.5 7.5 Q21.4 8.4 20.5 13.5 Q19.6 8.4 14.5 7.5 Q19.6 6.6 20.5 1.5Z" fill="#ee8d6c"/></svg>
<div class="abs" style="left:2706px;top:1040px;width:620px;height:369px;border-radius:12px 12px 0 0;background:#27282e;overflow:hidden"><div class="abs" style="left:0;top:67px;width:620px;height:2px;background:#2f3036"></div></div>
<div class="abs" style="left:2722px;top:1059px;line-height:30px;font-size:21px;font-weight:bold;color:#7ba3ee;white-space:pre">TS</div>
<div class="abs" style="left:2757px;top:1053px;line-height:40px;font-size:27px;font-weight:bold;color:#e6e6e8;white-space:pre">typescript</div>
<svg class="abs" style="left:3142px;top:1061px" width="25" height="26" viewBox="0 0 25 26"><rect x="2" y="8" width="14" height="16" rx="1.5" fill="none" stroke="#d8d8dc" stroke-width="2.4"/><path d="M7 4 V2.5 H22.5 V18 H20" fill="none" stroke="#d8d8dc" stroke-width="2.4"/></svg>
<svg class="abs" style="left:3196px;top:1061px" width="28" height="26" viewBox="0 0 28 26"><path d="M3 4 H25 V22 H3" fill="none" stroke="#d8d8dc" stroke-width="2.4"/><path d="M3 13 H17 M12 8 L17 13 L12 18" fill="none" stroke="#d8d8dc" stroke-width="2.4" stroke-linecap="round" stroke-linejoin="round"/></svg>
<div class="abs" style="left:3249px;top:1063px;width:2px;height:22px;background:#3c3d43"></div>
<svg class="abs" style="left:3278px;top:1058px" width="28" height="30" viewBox="0 0 28 30"><defs><linearGradient id="gb3278" x1="0" y1="0" x2="1" y2="0"><stop offset="0" stop-color="#5a8ef5"/><stop offset="0.7" stop-color="#7f9af0"/><stop offset="1" stop-color="#d99a8a"/></linearGradient></defs><path d="M15 3.8 A8.8 8.8 0 0 0 4.5 12.5 Q4.5 16.5 7.8 19.2 V22.5 H15.5 V19.2 Q17.5 17.6 18.6 15.5" fill="none" stroke="url(#gb3278)" stroke-width="2.6" stroke-linecap="round" stroke-linejoin="round"/><path d="M8.3 26.5h6.8" stroke="#e6b896" stroke-width="2.6" stroke-linecap="round"/><path d="M20.5 1.5 Q21.4 6.6 26.5 7.5 Q21.4 8.4 20.5 13.5 Q19.6 8.4 14.5 7.5 Q19.6 6.6 20.5 1.5Z" fill="#ee8d6c"/></svg>
<div class="abs" style="left:2706px;top:1108px;width:620px;height:301px;overflow:hidden">
<div class="ln" style="left:17px;top:21px;line-height:36px;height:36px"><span class="kw">function</span> <span class="fn2">solution</span><span class="pu">(</span><span class="pa">nums</span><span class="pu">: </span><span class="ty">number</span><span class="pu">[],</span></div>
<div class="ln" style="left:17px;top:57px;line-height:36px;height:36px"><span class="pa">k</span><span class="pu">: </span><span class="ty">number</span><span class="pu">): </span><span class="ty">number</span><span class="pu">[] {</span></div>
<div class="ln" style="left:17px;top:93px;line-height:36px;height:36px">    <span class="cm">// 首先创建一个 Map 来存储元素及其出</span></div>
<div class="ln" style="left:17px;top:129px;line-height:36px;height:36px">    <span class="cm">现的次数</span></div>
<div class="ln" style="left:17px;top:165px;line-height:36px;height:36px">    <span class="kw">const</span> <span class="va">frequencyMap</span><span class="pu"> = </span><span class="kw">new</span></div>
<div class="ln" style="left:17px;top:201px;line-height:36px;height:36px">    <span class="fn2">Map</span><span class="pu">&lt;</span><span class="ty">number</span><span class="pu">, </span><span class="ty">number</span><span class="pu">&gt;();</span></div>
<div class="ln" style="left:17px;top:237px;line-height:36px;height:36px">    <span class="kw">for</span><span class="pu"> (</span><span class="kw">const</span> <span class="va">num</span> <span class="kw">of</span> <span class="pa">nums</span><span class="pu">) {</span></div>
<div class="ln" style="left:17px;top:273px;line-height:36px;height:36px">        <span class="kw">if</span><span class="pu"> (</span><span class="pa">frequencyMap</span><span class="pu">.</span><span class="me">has</span><span class="pu">(</span><span class="pa">num</span><span class="pu">)) {</span></div>
</div>
<div class="abs" style="left:3354px;top:160px;width:11px;height:739px;border-radius:6px;background:#3a3b41"></div>
<div class="abs" style="left:2690px;top:1438px;width:652px;height:135px;border-radius:14px;padding:2px;background:linear-gradient(160deg,#5a86e0 0%,#5f7ad8 45%,#e6a884 75%,#b070e0 100%)"><div style="width:100%;height:100%;border-radius:12px;background:#1b1c21"></div></div>
<div class="abs" style="left:2711px;top:1456px;line-height:40px;font-size:26px;color:#9b9ca2;white-space:pre">你可以问我问题</div>
<svg class="abs" style="left:3282px;top:1519px" width="36" height="34" viewBox="0 0 36 34"><path d="M34 1 L1 17 L13 20 L17 33 Z" fill="#7e7f86"/><path d="M34 1 L13 20" stroke="#1b1c21" stroke-width="1.5"/></svg>
<div class="abs" style="left:3377px;top:72px;width:80px;height:112px;border-radius:40px;padding:3px;background:linear-gradient(180deg,#7f9ee8 0%,#a89ad8 40%,#b58aa8 100%)"><div style="width:100%;height:100%;border-radius:37px;background:#232429"></div></div>
<svg class="abs" style="left:3395px;top:95px" width="30" height="30" viewBox="0 0 30 30"><path d="M15 3v5" stroke="#5b8ff5" stroke-width="2.6" stroke-linecap="round"/><path d="M7 6.5l3 3" stroke="#5b8ff5" stroke-width="2.6" stroke-linecap="round"/><path d="M23 6.5l-3 3" stroke="#6a9cf7" stroke-width="2.6" stroke-linecap="round"/><path d="M3 15h5" stroke="#f0a070" stroke-width="2.6" stroke-linecap="round"/><path d="M22 15h5" stroke="#c58ad8" stroke-width="2.6" stroke-linecap="round"/><path d="M23 23l-3-3" stroke="#d88ab0" stroke-width="2.6" stroke-linecap="round"/><path d="M15 22v4" stroke="#c58ad8" stroke-width="2.6" stroke-linecap="round"/><path d="M5 25L14 16" stroke="#f09a6a" stroke-width="3" stroke-linecap="round"/></svg>
<div class="abs" style="left:3396px;top:135px;line-height:34px;font-size:24px;font-weight:bold;color:#fff;white-space:pre">AI</div>
<svg class="abs" style="left:3396px;top:211px" width="28" height="33" viewBox="0 0 28 33"><path d="M9 6 Q14 1 19 6" fill="none" stroke="#dcdcdc" stroke-width="2.4"/><rect x="6" y="8" width="16" height="22" rx="8" fill="none" stroke="#dcdcdc" stroke-width="2.4"/><path d="M14 12v16M1 13h5M22 13h5M1 21h5M22 21h5M2 30l4-3M26 30l-4-3" stroke="#dcdcdc" stroke-width="2.4" stroke-linecap="round"/></svg>
<svg class="abs" style="left:3396px;top:1538px" width="28" height="27" viewBox="0 0 28 27"><rect x="1.5" y="1.5" width="25" height="24" rx="2" fill="none" stroke="#dcdcdc" stroke-width="2.4"/><path d="M1.5 15 H26.5" stroke="#dcdcdc" stroke-width="2.4"/></svg>
<div class="abs" style="left:0;top:1596px;width:3434px;height:42px;background:#393c47"></div>
<svg class="abs" style="left:56px;top:1608px" width="25" height="25" viewBox="0 0 25 25"><circle cx="12.5" cy="12.5" r="12" fill="#9c9ea6"/><path d="M8.5 8.5 L16.5 16.5 M16.5 8.5 L8.5 16.5" stroke="#3a3d48" stroke-width="2.6" stroke-linecap="round"/></svg>
<div class="abs" style="left:90px;top:1602px;line-height:38px;font-size:26px;color:#a3a5ad;white-space:pre">1</div>
<svg class="abs" style="left:113px;top:1608px" width="25" height="25" viewBox="0 0 25 25"><circle cx="12.5" cy="12.5" r="12" fill="#9c9ea6"/><path d="M12.5 6 V14" stroke="#3a3d48" stroke-width="3" stroke-linecap="round"/><circle cx="12.5" cy="18.5" r="1.8" fill="#3a3d48"/></svg>
<div class="abs" style="left:145px;top:1602px;line-height:38px;font-size:26px;color:#a3a5ad;white-space:pre">0</div>
<div class="abs" style="left:2820px;top:1602px;line-height:38px;font-size:26px;color:#a3a5ad;white-space:pre">行 13，列 2</div>
<div class="abs" style="left:2983px;top:1602px;line-height:38px;font-size:26px;color:#a3a5ad;white-space:pre">空格: 2</div>
<div class="abs" style="left:3092px;top:1602px;line-height:38px;font-size:26px;color:#a3a5ad;white-space:pre">UTF-8</div>
<div class="abs" style="left:3198px;top:1602px;line-height:38px;font-size:26px;color:#a3a5ad;white-space:pre">LF</div>
<div class="abs" style="left:3256px;top:1602px;line-height:38px;font-size:26px;color:#a3a5ad;white-space:pre">{ }</div>
<div class="abs" style="left:3294px;top:1602px;line-height:38px;font-size:26px;color:#a3a5ad;white-space:pre">TypeScript</div>
<div class="abs" style="left:3058px;top:1565px;line-height:40px;font-size:24.8px;letter-spacing:0.2px;color:#e8e8ea;white-space:pre;text-shadow:0 0 3px #000,0 0 2px #000">掘金技术社区 @ 程序员Better</div>
</body></html>
